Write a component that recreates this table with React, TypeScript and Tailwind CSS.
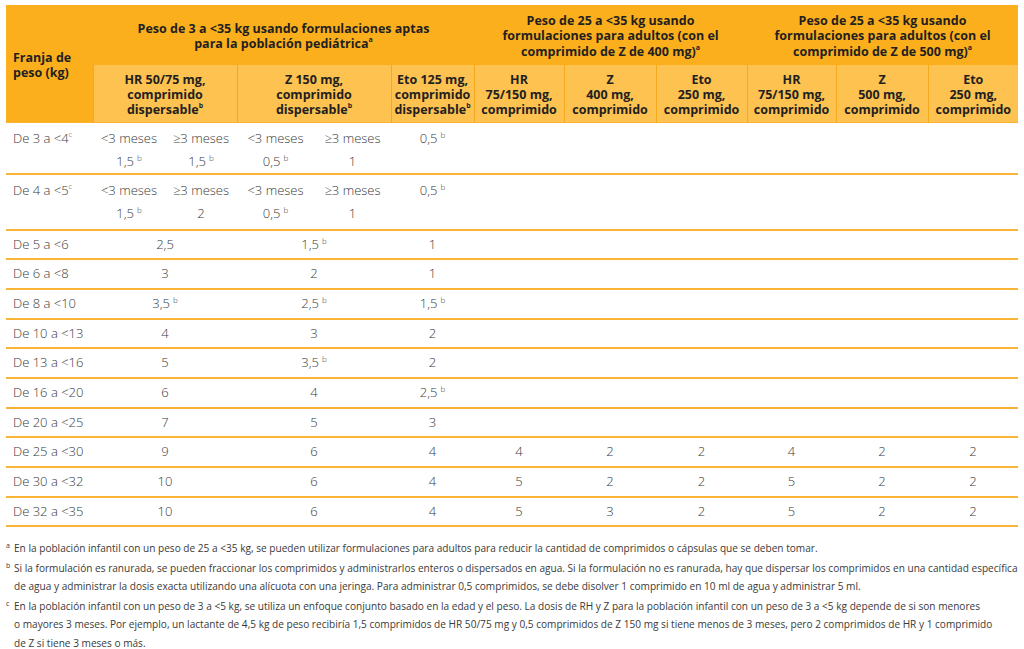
import React from "react";

// peso, HR, Z, Eto (pediatric) ; adult columns only for the last three bands
type Row = { band: string; hr: string; z: string; eto: string; adult?: string[] };

const rows: Row[] = [
  { band: "De 5 a <6", hr: "2,5", z: "1,5^b", eto: "1" },
  { band: "De 6 a <8", hr: "3", z: "2", eto: "1" },
  { band: "De 8 a <10", hr: "3,5^b", z: "2,5^b", eto: "1,5^b" },
  { band: "De 10 a <13", hr: "4", z: "3", eto: "2" },
  { band: "De 13 a <16", hr: "5", z: "3,5^b", eto: "2" },
  { band: "De 16 a <20", hr: "6", z: "4", eto: "2,5^b" },
  { band: "De 20 a <25", hr: "7", z: "5", eto: "3" },
  { band: "De 25 a <30", hr: "9", z: "6", eto: "4", adult: ["4", "2", "2", "4", "2", "2"] },
  { band: "De 30 a <32", hr: "10", z: "6", eto: "4", adult: ["5", "2", "2", "5", "2", "2"] },
  { band: "De 32 a <35", hr: "10", z: "6", eto: "4", adult: ["5", "3", "2", "5", "2", "2"] },
];

const adultHeads = [
  ["HR", "75/150 mg,", "comprimido"],
  ["Z", "400 mg,", "comprimido"],
  ["Eto", "250 mg,", "comprimido"],
  ["HR", "75/150 mg,", "comprimido"],
  ["Z", "500 mg,", "comprimido"],
  ["Eto", "250 mg,", "comprimido"],
];

function Val({ v }: { v: string }) {
  const [num, sup] = v.split("^");
  return (
    <>
      {num}
      {sup && <sup className="text-[8px] ml-[3px] -top-[5px]">{sup}</sup>}
    </>
  );
}

function Sup({ c }: { c: string }) {
  return <sup className="text-[7px] -top-[6px]">{c}</sup>;
}

const sub = "border-l border-[#f5a91c] bg-[#fdc24f] align-middle text-center leading-[15px] pt-[2px]";
const rowLine = "border-b-2 border-[#fbb336]";

export default function App() {
  return (
    <div className="w-[1024px] h-[649px] bg-white pt-[5px] pl-[6px] text-[#3a3a3a]" style={{ fontFamily: "'Open Sans', sans-serif" }}>
      <table className="table-fixed border-collapse w-[1012px]">
        <colgroup>
          <col className="w-[87px]" />
          <col className="w-[72px]" />
          <col className="w-[72px]" />
          <col className="w-[77px]" />
          <col className="w-[77px]" />
          <col className="w-[83px]" />
          <col className="w-[90px]" />
          <col className="w-[92px]" />
          <col className="w-[91px]" />
          <col className="w-[89px]" />
          <col className="w-[92px]" />
          <col className="w-[90px]" />
        </colgroup>
        <thead className="text-[12.5px] font-bold text-[#231f20]">
          <tr className="h-[60px] bg-[#fcaf1c]">
            <th rowSpan={2} className="text-left align-middle pl-[7px] pt-[3px] leading-[15px] font-bold">
              Franja de
              <br />
              peso (kg)
            </th>
            <th colSpan={5} className="text-center align-middle leading-[15px] pt-[1px]">
              Peso de 3 a &lt;35 kg usando formulaciones aptas
              <br />
              para la población pediátrica<Sup c="a" />
            </th>
            <th colSpan={3} className="text-center align-middle leading-[15.5px] pt-[2px]">
              Peso de 25 a &lt;35 kg usando
              <br />
              formulaciones para adultos (con el
              <br />
              comprimido de Z de 400 mg)<Sup c="a" />
            </th>
            <th colSpan={3} className="text-center align-middle leading-[15.5px] pt-[2px]">
              Peso de 25 a &lt;35 kg usando
              <br />
              formulaciones para adultos (con el
              <br />
              comprimido de Z de 500 mg)<Sup c="a" />
            </th>
          </tr>
          <tr className="h-[57px]">
            <th colSpan={2} className={sub}>
              HR 50/75 mg,
              <br />
              comprimido
              <br />
              dispersable<Sup c="b" />
            </th>
            <th colSpan={2} className={sub}>
              Z 150 mg,
              <br />
              comprimido
              <br />
              dispersable<Sup c="b" />
            </th>
            <th className={sub}>
              Eto 125 mg,
              <br />
              comprimido
              <br />
              dispersable<Sup c="b" />
            </th>
            {adultHeads.map((h, i) => (
              <th key={i} className={sub}>
                {h[0]}
                <br />
                {h[1]}
                <br />
                {h[2]}
              </th>
            ))}
          </tr>
        </thead>
        <tbody className="text-[13px] font-light">
          <tr className={`${rowLine} border-t border-t-[#fbb336] h-[51px] text-center leading-[23px]`}>
            <td className="text-left align-top pl-[7px] pt-[4px]">
              De 3 a &lt;4<Sup c="c" />
            </td>
            <td className="align-top pt-[4px]">&lt;3 meses<br /><Val v="1,5^b" /></td>
            <td className="align-top pt-[4px]">≥3 meses<br /><Val v="1,5^b" /></td>
            <td className="align-top pt-[4px]">&lt;3 meses<br /><Val v="0,5^b" /></td>
            <td className="align-top pt-[4px]">≥3 meses<br />1</td>
            <td className="align-top pt-[4px]"><Val v="0,5^b" /></td>
            <td colSpan={6} />
          </tr>
          <tr className={`${rowLine} h-[56px] text-center leading-[23px]`}>
            <td className="text-left align-top pl-[7px] pt-[4px]">
              De 4 a &lt;5<Sup c="c" />
            </td>
            <td className="align-top pt-[4px]">&lt;3 meses<br /><Val v="1,5^b" /></td>
            <td className="align-top pt-[4px]">≥3 meses<br />2</td>
            <td className="align-top pt-[4px]">&lt;3 meses<br /><Val v="0,5^b" /></td>
            <td className="align-top pt-[4px]">≥3 meses<br />1</td>
            <td className="align-top pt-[4px]"><Val v="0,5^b" /></td>
            <td colSpan={6} />
          </tr>
          {rows.map((r) => (
            <tr key={r.band} className={`${rowLine} h-[29.7px] text-center`}>
              <td className="text-left pl-[7px]">{r.band}</td>
              <td colSpan={2}><Val v={r.hr} /></td>
              <td colSpan={2}><Val v={r.z} /></td>
              <td><Val v={r.eto} /></td>
              {r.adult ? r.adult.map((a, i) => <td key={i}>{a}</td>) : <td colSpan={6} />}
            </tr>
          ))}
        </tbody>
      </table>

      <div className="mt-[12px] text-[10.1px] leading-[18.5px] text-[#3a3a3a] flex flex-col gap-[1px] whitespace-nowrap">
        <div className="flex">
          <span className="w-[8px] shrink-0 text-[7px] leading-[14px]">a</span>
          <p>
            En la población infantil con un peso de 25 a &lt;35 kg, se pueden utilizar formulaciones para adultos para reducir la cantidad de comprimidos o cápsulas que se deben tomar.
          </p>
        </div>
        <div className="flex">
          <span className="w-[8px] shrink-0 text-[7px] leading-[14px]">b</span>
          <p>
            Si la formulación es ranurada, se pueden fraccionar los comprimidos y administrarlos enteros o dispersados en agua. Si la formulación no es ranurada, hay que dispersar los comprimidos en una cantidad específica
            <br />
            de agua y administrar la dosis exacta utilizando una alícuota con una jeringa. Para administrar 0,5 comprimidos, se debe disolver 1 comprimido en 10 ml de agua y administrar 5 ml.
          </p>
        </div>
        <div className="flex">
          <span className="w-[8px] shrink-0 text-[7px] leading-[14px]">c</span>
          <p>
            En la población infantil con un peso de 3 a &lt;5 kg, se utiliza un enfoque conjunto basado en la edad y el peso. La dosis de RH y Z para la población infantil con un peso de 3 a &lt;5 kg depende de si son menores
            <br />
            o mayores 3 meses. Por ejemplo, un lactante de 4,5 kg de peso recibiría 1,5 comprimidos de HR 50/75 mg y 0,5 comprimidos de Z 150 mg si tiene menos de 3 meses, pero 2 comprimidos de HR y 1 comprimido
            <br />
            de Z si tiene 3 meses o más.
          </p>
        </div>
      </div>
    </div>
  );
}
